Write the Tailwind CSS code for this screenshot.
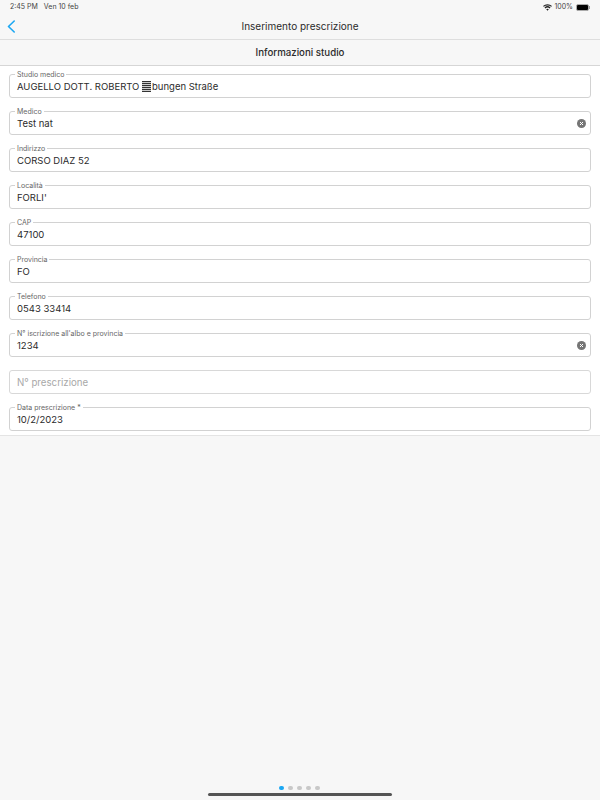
<!DOCTYPE html>
<html lang="en">
<head>
<meta charset="UTF-8" />
<meta name="viewport" content="width=device-width, initial-scale=1" />
<title>Inserimento prescrizione</title>
<script src="https://cdn.jsdelivr.net/npm/@tailwindcss/browser@4"></script>
</head>
<body class="bg-[#f7f7f7] font-['Inter',sans-serif] text-[#2b2b2b]">
<div class="relative w-[600px] h-[800px] overflow-hidden flex flex-col">
  <!-- status bar -->
  <div class="h-[13px] flex items-center justify-between pl-[10px] pr-[10px] pt-[1px] text-[7px] text-[#444]">
    <div class="flex gap-[6px]"><span>2:45 PM</span><span>Ven 10 feb</span></div>
    <div class="flex items-center gap-[2px]">
      <svg width="9" height="7" viewBox="0 0 18 14" fill="#222"><path d="M9 13.5 6.4 10.7a3.8 3.8 0 0 1 5.2 0zM4.7 8.9 3 7.1a8.700 8.700 0 0 1 12 0l-1.700 1.800a6.200 6.200 0 0 0-8.600 0zM1.700 5.700 0 3.900a13 13 0 0 1 18 0l-1.700 1.800a10.600 10.600 0 0 0-14.600 0z"/></svg>
      <span>100%</span>
      <div class="flex items-center ml-[1px]">
        <div class="w-[13px] h-[7px] rounded-[2px] border border-[#aaa] bg-black"></div>
        <div class="w-[1px] h-[3px] bg-[#999]"></div>
      </div>
    </div>
  </div>
  <!-- nav -->
  <div class="relative h-[27px] flex items-center justify-center border-b border-[#dedede] text-[10px] pt-[1px]">
    <svg class="absolute left-[7px] top-[7px]" width="9" height="13" viewBox="0 0 9 13" fill="none" stroke="#1ba7f2" stroke-width="1.600" stroke-linecap="round" stroke-linejoin="round"><path d="M7.200 1 1.500 6.500 7.200 12"/></svg>
    <span>Inserimento prescrizione</span>
  </div>
  <div class="h-[26px] flex items-center justify-center border-b border-[#d6d6d6] text-[9.700px] font-medium pt-[1px]">Informazioni studio</div>
  <!-- form -->
  <div class="bg-white h-[370px] border-b border-[#e4e4e4] px-[9px] pt-[8px] flex flex-col gap-[13px]">
    <div class="relative h-[24px] rounded-[3px] border border-[#d2d2d2] flex items-center pl-[7px] pr-[4px] pt-[3px] text-[9.500px]">
      <span class="absolute -top-[5px] left-[5px] bg-white px-[2px] text-[7px] leading-[9px] text-[#666]">Studio medico</span>
      <span class="flex items-center">AUGELLO DOTT. ROBERTO&nbsp;<span class="inline-block w-[9px] h-[11px] mr-[1px] -translate-y-[1px] bg-[repeating-linear-gradient(to_bottom,#333_0,#333_1px,#ccc_1px,#ccc_2px)]"></span>bungen Straße</span>
    </div>
    <div class="relative h-[24px] rounded-[3px] border border-[#d2d2d2] flex items-center justify-between pl-[7px] pr-[4px] pt-[3px] text-[9.500px]">
      <span class="absolute -top-[5px] left-[5px] bg-white px-[2px] text-[7px] leading-[9px] text-[#666]">Medico</span>
      <span>Test nat</span>
      <svg class="-translate-y-[1px]" width="9" height="9" viewBox="0 0 9 9"><circle cx="4.500" cy="4.500" r="4.500" fill="#757575"/><path d="M3 3l3 3M6 3 3 6" stroke="#fff" stroke-width="1"/></svg>
    </div>
    <div class="relative h-[24px] rounded-[3px] border border-[#d2d2d2] flex items-center pl-[7px] pr-[4px] pt-[3px] text-[9.500px]">
      <span class="absolute -top-[5px] left-[5px] bg-white px-[2px] text-[7px] leading-[9px] text-[#666]">Indirizzo</span>
      <span>CORSO DIAZ 52</span>
    </div>
    <div class="relative h-[24px] rounded-[3px] border border-[#d2d2d2] flex items-center pl-[7px] pr-[4px] pt-[3px] text-[9.500px]">
      <span class="absolute -top-[5px] left-[5px] bg-white px-[2px] text-[7px] leading-[9px] text-[#666]">Località</span>
      <span>FORLI'</span>
    </div>
    <div class="relative h-[24px] rounded-[3px] border border-[#d2d2d2] flex items-center pl-[7px] pr-[4px] pt-[3px] text-[9.500px]">
      <span class="absolute -top-[5px] left-[5px] bg-white px-[2px] text-[7px] leading-[9px] text-[#666]">CAP</span>
      <span>47100</span>
    </div>
    <div class="relative h-[24px] rounded-[3px] border border-[#d2d2d2] flex items-center pl-[7px] pr-[4px] pt-[3px] text-[9.500px]">
      <span class="absolute -top-[5px] left-[5px] bg-white px-[2px] text-[7px] leading-[9px] text-[#666]">Provincia</span>
      <span>FO</span>
    </div>
    <div class="relative h-[24px] rounded-[3px] border border-[#d2d2d2] flex items-center pl-[7px] pr-[4px] pt-[3px] text-[9.500px]">
      <span class="absolute -top-[5px] left-[5px] bg-white px-[2px] text-[7px] leading-[9px] text-[#666]">Telefono</span>
      <span>0543 33414</span>
    </div>
    <div class="relative h-[24px] rounded-[3px] border border-[#d2d2d2] flex items-center justify-between pl-[7px] pr-[4px] pt-[3px] text-[9.500px]">
      <span class="absolute -top-[5px] left-[5px] bg-white px-[2px] text-[7px] leading-[9px] text-[#666]">N° iscrizione all'albo e provincia</span>
      <span>1234</span>
      <svg class="-translate-y-[1px]" width="9" height="9" viewBox="0 0 9 9"><circle cx="4.500" cy="4.500" r="4.500" fill="#757575"/><path d="M3 3l3 3M6 3 3 6" stroke="#fff" stroke-width="1"/></svg>
    </div>
    <div class="relative h-[24px] rounded-[3px] border border-[#d8d8d8] flex items-center pl-[7px] pr-[4px] pt-[3px] text-[9.700px] text-[#a8a8a8]">
      <span>N° prescrizione</span>
    </div>
    <div class="relative h-[24px] rounded-[3px] border border-[#d2d2d2] flex items-center pl-[7px] pr-[4px] pt-[3px] text-[9.500px]">
      <span class="absolute -top-[5px] left-[5px] bg-white px-[2px] text-[7px] leading-[9px] text-[#666]">Data prescrizione *</span>
      <span>10/2/2023</span>
    </div>
  </div>
  <!-- page dots + home indicator -->
  <div class="absolute bottom-[10px] left-[279px] flex items-center gap-[4.500px]">
    <div class="w-[4.500px] h-[4.500px] rounded-full bg-[#1ba7f2]"></div>
    <div class="w-[4.500px] h-[4.500px] rounded-full bg-[#c8c8c8]"></div>
    <div class="w-[4.500px] h-[4.500px] rounded-full bg-[#c8c8c8]"></div>
    <div class="w-[4.500px] h-[4.500px] rounded-full bg-[#c8c8c8]"></div>
    <div class="w-[4.500px] h-[4.500px] rounded-full bg-[#c8c8c8]"></div>
  </div>
  <div class="absolute bottom-[4px] left-[208px] w-[184px] h-[3px] rounded-full bg-[#555]"></div>
</div>
</body>
</html>
